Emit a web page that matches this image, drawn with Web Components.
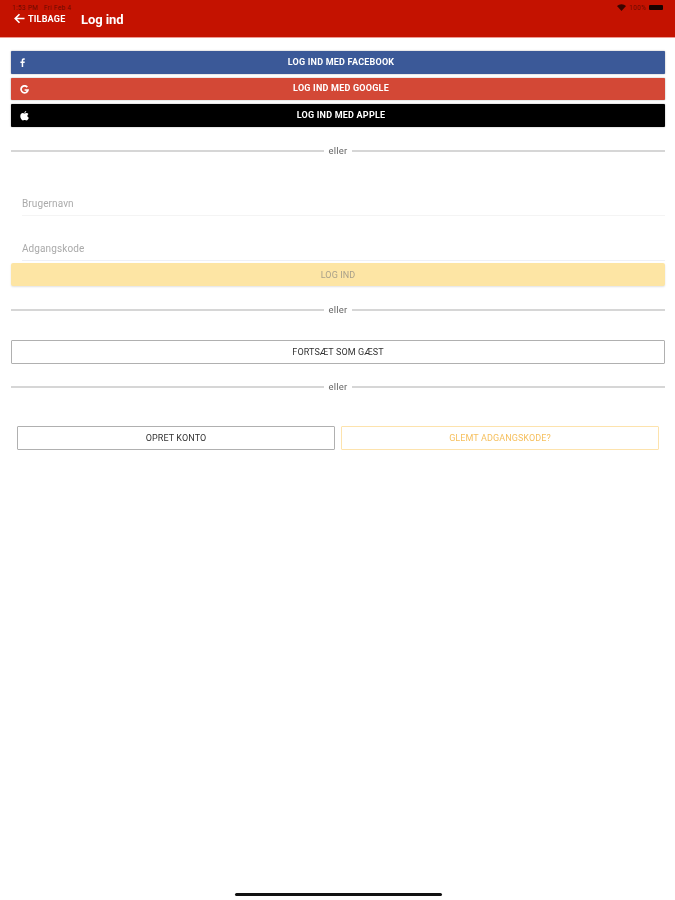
<!DOCTYPE html>
<html lang="da"><head><meta charset="utf-8"><title>Log ind</title>
<style>
html,body{margin:0;padding:0;background:#fff;height:100%}
body{font-family:Roboto,"Liberation Sans",sans-serif;width:675px;height:900px;overflow:hidden;display:flex;flex-direction:column}
</style></head><body>
<app-header></app-header>
<main-stack>
  <social-button style="--bg:#3b5998;margin-top:13px;--pb:1px" kind="f">LOG IND MED FACEBOOK</social-button>
  <social-button style="--bg:#d34836;margin-top:4px;--h:22px;--pb:2px" kind="g">LOG IND MED GOOGLE</social-button>
  <social-button style="--bg:#000;margin-top:4px;--pb:1px" kind="a">LOG IND MED APPLE</social-button>
  <or-divider style="margin-top:18px"></or-divider>
  <text-field style="margin-top:32px">Brugernavn</text-field>
  <text-field style="margin-top:18px;--line:#eef0f6">Adgangskode</text-field>
  <login-button style="margin-top:2px">LOG IND</login-button>
  <or-divider style="margin-top:18px"></or-divider>
  <outline-button style="margin-top:24px;--bc:#b0b0b0;--fg:#333">FORTSÆT SOM GÆST</outline-button>
  <or-divider style="margin-top:17px"></or-divider>
  <action-row style="margin-top:33px">
    <outline-button style="--bc:#b0b0b0;--fg:#333;flex:1">OPRET KONTO</outline-button>
    <outline-button style="--bc:#fde3ad;--fg:#f6c05f;flex:1">GLEMT ADGANGSKODE?</outline-button>
  </action-row>
</main-stack>
<home-bar></home-bar>
<script>
function def(name,html){customElements.define(name,class extends HTMLElement{
  constructor(){super();const r=this.attachShadow({mode:'open'});r.innerHTML=typeof html==='function'?html(this):html;}
});}
def('app-header',`<style>
:host{display:block;flex:none;height:37px;background:#c41200;border-bottom:1px solid #ee9a92;box-sizing:content-box;color:#fff;font-family:Roboto,sans-serif}
.status{display:flex;justify-content:space-between;align-items:center;height:14px;padding:1px 12px 0 12px;box-sizing:border-box;font-size:6.5px;color:#6d0a00;letter-spacing:.3px}
.right{display:flex;align-items:center;gap:3px}
.batt{width:14px;height:5px;background:#1a0300;border-radius:1px}
.bar{display:flex;align-items:center;height:11px;padding-left:14px;filter:blur(.3px)}
.back{display:flex;align-items:center;gap:3px;font-size:9px;font-weight:700;width:67px;letter-spacing:.2px;padding-bottom:2px}
.title{font-size:13px;font-weight:700;letter-spacing:-.1px}
</style>
<div class="status"><span>1:53 PM &nbsp; Fri Feb 4</span><span class="right"><svg width="9" height="7" viewBox="0 0 9 7"><path d="M0 2 A6.500 6.500 0 0 1 9 2 L4.500 7Z" fill="#3a0500"/></svg><span>100%</span><span class="batt"></span></span></div>
<div class="bar"><span class="back"><svg width="11" height="11" viewBox="0 0 11 11" fill="none" stroke="#fff" stroke-width="1.6"><path d="M10.500 5.500H1.500M5.500 1.200L1.200 5.500L5.500 9.800"/></svg><span>TILBAGE</span></span><span class="title">Log ind</span></div>`);
def('main-stack',`<style>:host{display:flex;flex-direction:column;flex:1;padding:0 10px 0 11px;min-height:0;filter:blur(.3px)}</style><slot></slot>`);
const icons={
 f:'<svg width="6" height="9" viewBox="0 0 6 9"><path fill="#fff" d="M1.700 9V5H.4V3.400h1.300V2.300C1.700 1 2.500.3 3.700.3c.5 0 1 0 1.100.1v1.400H4c-.6 0-.8.3-.8.8v.8h1.600L4.600 5H3.200v4z"/></svg>',
 g:'<svg width="9" height="9" viewBox="0 0 9 9" fill="none" stroke="#fff" stroke-width="1.700"><path d="M7.300 2.100A3.500 3.500 0 1 0 8 5H4.600"/></svg>',
 a:'<svg width="9" height="10" viewBox="0 0 9 10"><path fill="#fff" d="M6.200 0c.1.900-.7 2-1.800 1.900C4.300 1 5.200.1 6.200 0zM4.500 2.500c.5 0 1.100-.5 2-.5.800 0 1.500.4 1.900 1-1.600 1-1.300 3.100.4 3.800-.4 1.100-1.300 2.700-2.300 2.700-.7 0-.9-.4-1.800-.4s-1.200.4-1.800.4C1.700 9.500.3 7.300.3 5.300.3 3.300 1.600 2.100 2.800 2.100c.7 0 1.300.4 1.700.4z"/></svg>'};
def('social-button',el=>`<style>
:host{display:flex;flex:none;position:relative;align-items:center;justify-content:center;box-sizing:border-box;padding-bottom:var(--pb,0);padding-left:6px;height:var(--h,23px);background:var(--bg);color:#fff;font:700 9px Roboto,sans-serif;letter-spacing:.22px;border-radius:1px;box-shadow:0 0 1.500px rgba(0,0,0,.45)}
.i{position:absolute;left:9px;top:0;bottom:0;display:flex;align-items:center}
</style><span class="i">${icons[el.getAttribute('kind')]}</span><slot></slot>`);
def('or-divider',`<style>
:host{display:flex;flex:none;align-items:center;gap:5px;height:12px;font:400 9.500px Roboto,sans-serif;color:#666;letter-spacing:.2px}
i{flex:1;height:1.500px;background:#d6d6d6}
span{position:relative;top:-1px}
</style><i></i><span>eller</span><i></i>`);
def('text-field',`<style>
:host{display:block;flex:none;margin-left:11px;height:26px;border-bottom:1px solid var(--line,#f4f4f4);font:400 10px Roboto,sans-serif;color:#aaa;letter-spacing:.1px;box-sizing:content-box}
div{height:26px;display:flex;align-items:center;padding-top:2px;box-sizing:border-box}
</style><div><slot></slot></div>`);
def('login-button',`<style>
:host{display:flex;flex:none;align-items:center;justify-content:center;height:23px;background:#fde5a4;color:#a9a08a;font:400 9px Roboto,sans-serif;letter-spacing:.1px;border-radius:2px;box-shadow:0 1px 2px rgba(0,0,0,.12)}
</style><slot></slot>`);
def('outline-button',`<style>
:host{display:flex;flex:none;align-items:center;justify-content:center;height:24px;box-sizing:border-box;padding-bottom:1px;border:1px solid var(--bc);color:var(--fg);background:#fff;font:400 9px Roboto,sans-serif;letter-spacing:.1px;border-radius:1px}
</style><slot></slot>`);
def('action-row',`<style>:host{display:flex;flex:none;gap:6px;padding:0 6px}</style><slot></slot>`);
def('home-bar',`<style>
:host{display:flex;flex:none;justify-content:center;height:7px;padding-left:1px}
i{width:207px;height:3px;border-radius:2px;background:#111}
</style><i></i>`);
</script>
</body></html>
